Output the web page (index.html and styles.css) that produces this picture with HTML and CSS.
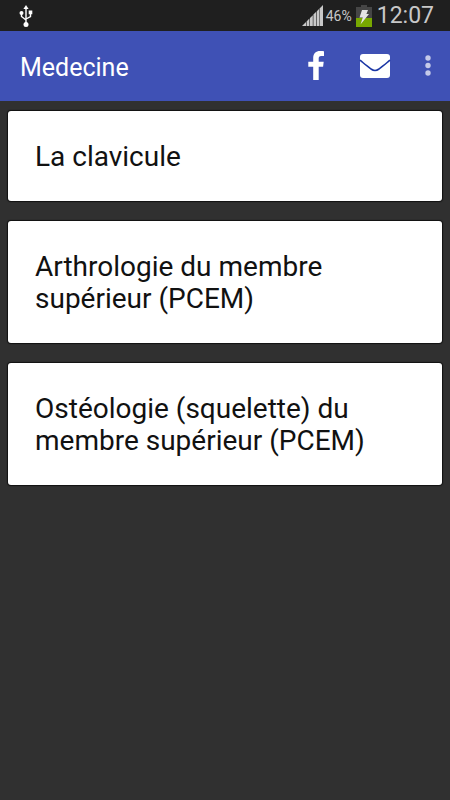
FILE: index.html
```html
<!DOCTYPE html>
<html lang="fr">
<head>
    <meta charset="UTF-8">
    <meta name="viewport" content="width=device-width, initial-scale=1.0">
    <title>Medecine</title>
    <link rel="stylesheet" href="styles.css">
</head>
<body>
    <div class="status-bar">
        <svg class="usb-icon" width="16" height="24" viewBox="0 0 16 24" fill="none" stroke="#fff" stroke-width="1.4">
            <path d="M8 4v17M3.5 9v3.5L8 16M12.5 9v3.5L8 15"/>
            <path d="M8 1l2.6 4H5.4z" fill="#fff" stroke="none"/>
            <circle cx="3.5" cy="9" r="2" fill="#fff" stroke="none"/>
            <path d="M10.7 6.5h3.6v3.8h-3.6z" fill="#fff" stroke="none"/>
            <circle cx="8" cy="20.5" r="2.5" fill="#fff" stroke="none"/>
        </svg>
        <div class="status-right">
            <svg width="22" height="22" viewBox="0 0 22 22" fill="#c8c8c8">
                <path d="M0 21l4-4v4zM4.600 16.400l2.800-2.800V21H4.600zM8 13l2.800-2.800V21H8zM11.400 9.600l2.800-2.800V21h-2.800zM14.800 6.200l2.200-2.200V21h-2.200zM17.500 3.500L21 0v21h-3.500z"/>
            </svg>
            <span class="battery-level">46%</span>
            <svg class="battery-icon" width="16" height="22" viewBox="0 0 16 22">
                <path d="M5 0h6v2h5v11H0V2h5z" fill="#464646"/>
                <path d="M0 13h16v9H0z" fill="#78a800"/>
                <path d="M6 5h6l-1.600 4H13L4.500 19.500l2.300-7H3.500z" fill="#e4e4e4"/>
            </svg>
            <span class="clock">12:07</span>
        </div>
    </div>

    <header class="toolbar">
        <h1 class="title">Medecine</h1>
        <button class="icon-btn facebook" aria-label="Facebook">
            <svg width="16" height="30" viewBox="0 0 16 30" fill="#fff">
                <path d="M16 .3v4.800h-2.800c-2 0-2.500 1-2.500 2.500v3.100h5l-.6 5h-4.400V29H5.200V15.700H.3v-5h4.900V7C5.200 2.500 8 0 12 0c2 0 3.500.1 4 .3z"/>
            </svg>
        </button>
        <button class="icon-btn mail" aria-label="E-mail">
            <svg width="32" height="26" viewBox="0 0 32 26">
                <rect x="1" y="1" width="30" height="24" rx="3" fill="#fff"/>
                <path d="M1 7c3 3 8 6.500 11 9 3 2.200 5 2.200 8 0 3-2.500 8-6 11-9" fill="none" stroke="#1a35a5" stroke-width="1.600"/>
            </svg>
        </button>
        <button class="icon-btn more" aria-label="Plus d'options">
            <svg width="6" height="22" viewBox="0 0 6 22" fill="#c5cae9">
                <circle cx="3" cy="3" r="2.700"/>
                <circle cx="3" cy="10.500" r="2.700"/>
                <circle cx="3" cy="18" r="2.700"/>
            </svg>
        </button>
    </header>

    <main class="card-list">
        <a href="#clavicule" class="card">La clavicule</a>
        <a href="#arthrologie" class="card">Arthrologie du membre supérieur (PCEM)</a>
        <a href="#osteologie" class="card">Ostéologie (squelette) du membre supérieur (PCEM)</a>
    </main>
</body>
</html>
```
FILE: styles.css
```css
body {
    margin: 0;
    min-height: 100vh;
    background-color: #303030;
    font-family: Roboto, sans-serif;
}
.status-bar {
    display: flex;
    justify-content: space-between;
    align-items: center;
    height: 31px;
    padding: 0 16px 0 18px;
    background-color: #1f1f1f;
    color: #c8c8c8;
}
.status-right {
    display: flex;
    align-items: center;
}
.battery-level {
    margin: 0 4px 0 2px;
    font-size: 14px;
}
.clock {
    margin-left: 5px;
    font-size: 23px;
    line-height: 30px;
}
.toolbar {
    display: flex;
    align-items: center;
    height: 70px;
    padding: 0 4px 0 20px;
    background-color: #3f51b5;
}
.title {
    flex: 1;
    margin: 0;
    padding-top: 2px;
    font-size: 25px;
    font-weight: 400;
    color: #fff;
}
.icon-btn {
    display: flex;
    justify-content: center;
    align-items: center;
    height: 48px;
    padding: 0;
    border: none;
    background: none;
    cursor: pointer;
}
.facebook {
    width: 48px;
}
.mail {
    width: 70px;
}
.more {
    width: 36px;
}
.card-list {
    display: flex;
    flex-direction: column;
    gap: 20px;
    padding: 10px 8px;
}
.card {
    padding: 30px 27px 28px;
    border-radius: 3px;
    background-color: #fff;
    box-shadow: 0 0 1px 1px #111;
    font-size: 28px;
    line-height: 32px;
    color: #111;
    text-decoration: none;
}
```
